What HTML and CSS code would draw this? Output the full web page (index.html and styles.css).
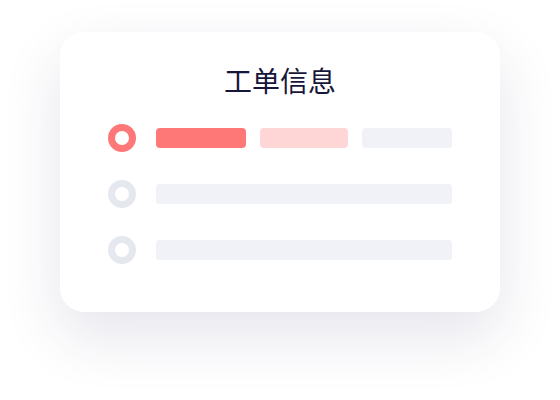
FILE: index.html
```html
<!DOCTYPE html>
<html lang="zh-CN">
<head>
    <meta charset="UTF-8">
    <meta name="viewport" content="width=device-width, initial-scale=1.0">
    <title>工单信息</title>
    <link rel="stylesheet" href="styles.css">
</head>
<body>

<div class="card">
    <h2 class="card-title">工单信息</h2>

    <!-- Active row -->
    <div class="row">
        <span class="dot active"></span>
        <div class="bars">
            <span class="bar bar-main"></span>
            <span class="bar bar-soft"></span>
            <span class="bar bar-empty"></span>
        </div>
    </div>

    <div class="row">
        <span class="dot"></span>
        <div class="bars">
            <span class="bar bar-empty full"></span>
        </div>
    </div>

    <div class="row">
        <span class="dot"></span>
        <div class="bars">
            <span class="bar bar-empty full"></span>
        </div>
    </div>
</div>

</body>
</html>
```

FILE: styles.css
```css
html {
    height: 100%;
}
body {
    margin: 0;
    min-height: 100%;
    padding-top: 32px;
    box-sizing: border-box;
    background-color: #fff;
    font-family: "Noto Sans CJK SC", "Noto Sans", sans-serif;
}
.card {
    width: 440px;
    height: 280px;
    margin: 0 auto;
    padding: 30px 48px 48px;
    box-sizing: border-box;
    background-color: #fff;
    border-radius: 24px;
    box-shadow: 0 24px 60px rgba(40, 45, 100, 0.12);
    display: flex;
    flex-direction: column;
    gap: 28px;
}
.card-title {
    margin: 0 0 -2px;
    font-size: 28px;
    font-weight: 400;
    line-height: 36px;
    text-align: center;
    color: #16163a;
}
.row {
    display: flex;
    align-items: center;
    gap: 20px;
}
.dot {
    width: 28px;
    height: 28px;
    border: 7px solid #e6e8f0;
    border-radius: 50%;
    box-sizing: border-box;
    flex-shrink: 0;
}
.dot.active {
    border-color: #ff7878;
}
.bars {
    flex: 1;
    display: flex;
    gap: 14px;
}
.bar {
    height: 20px;
    border-radius: 4px;
}
.bar-main {
    width: 90px;
    background-color: #ff7878;
}
.bar-soft {
    width: 88px;
    background-color: #ffd6d6;
}
.bar-empty {
    width: 90px;
    background-color: #f1f2f7;
}
.bar-empty.full {
    width: auto;
    flex: 1;
}
```
